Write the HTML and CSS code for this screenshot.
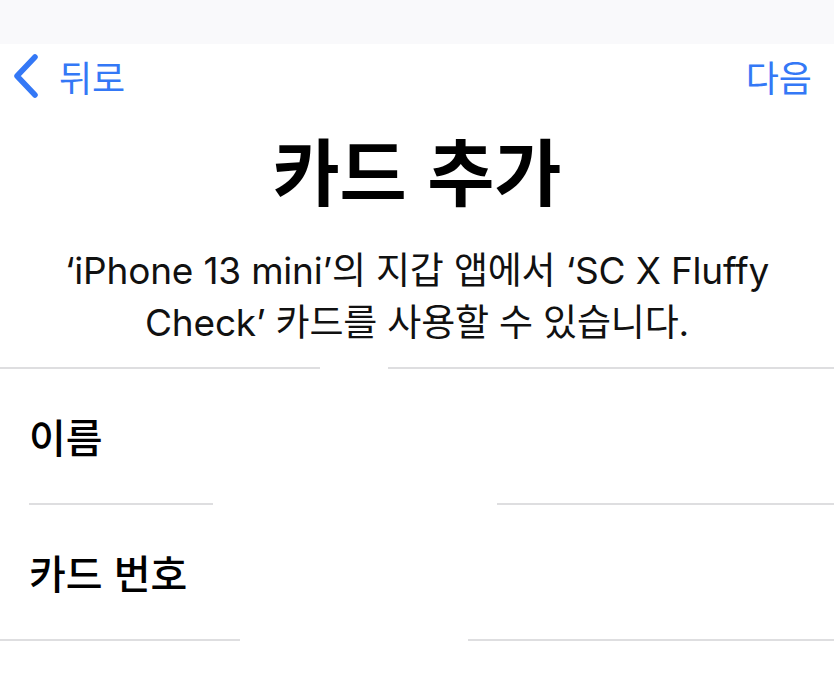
FILE: index.html
```html
<!DOCTYPE html>
<html lang="ko">
<head>
<meta charset="utf-8">
<link rel="stylesheet" href="styles.css">
</head>
<body>
<div class="status"></div>
<nav class="nav">
  <a class="back">
    <svg class="chev" width="26" height="44" viewBox="0 0 26 44"><polyline points="22,3 4,22 22,41" fill="none" stroke="#3478f6" stroke-width="5.5" stroke-linecap="round" stroke-linejoin="round"/></svg>
    <span>뒤로</span>
  </a>
  <a class="next">다음</a>
</nav>
<h1 class="title">카드 추가</h1>
<p class="desc">‘iPhone 13 mini’의 지갑 앱에서 ‘SC X Fluffy<br>Check’ 카드를 사용할 수 있습니다.</p>
<div class="sep sep1"><i class="a"></i><i class="b"></i></div>
<div class="row">이름</div>
<div class="sep sep2"><i class="a"></i><i class="b"></i></div>
<div class="row">카드 번호</div>
<div class="sep sep3"><i class="a"></i><i class="b"></i></div>
</body>
</html>
```

FILE: styles.css
```css
html, body {
  margin: 0;
  padding: 0;
  background: #ffffff;
}
body {
  font-family: "Inter", "Noto Sans CJK KR", sans-serif;
  color: #000;
  width: 834px;
  height: 699px;
  overflow: hidden;
}
.status {
  height: 44px;
  background: #f9f9fb;
}
.nav {
  height: 64px;
  display: flex;
  align-items: center;
  justify-content: space-between;
  padding: 0 22px 0 13px;
}
.back, .next {
  color: #3478f6;
  font-size: 36px;
  display: flex;
  align-items: center;
  font-family: "Noto Sans CJK KR", sans-serif;
}
.back span {
  margin-left: 20px;
}
.chev {
  display: block;
}
.title {
  margin: 15px 0 0;
  text-align: center;
  font-size: 73px;
  font-weight: 700;
  line-height: 90px;
  font-family: "Noto Sans CJK KR", sans-serif;
}
.desc {
  margin: 32px 0 0;
  text-align: center;
  font-size: 37px;
  line-height: 52px;
  color: #111;
  letter-spacing: -0.2px;
}
.sep {
  display: flex;
  justify-content: space-between;
  height: 2px;
}
.sep i {
  display: block;
  height: 2px;
  background: #dedee0;
}
.sep1 { margin-top: 18px; }
.sep1 .a { width: 320px; }
.sep1 .b { width: 446px; }
.sep2 { padding-left: 29px; }
.sep2 .a { width: 184px; }
.sep2 .b { width: 337px; }
.sep3 .a { width: 240px; }
.sep3 .b { width: 366px; }
.row {
  height: 134px;
  display: flex;
  align-items: center;
  padding-left: 29px;
  font-size: 40px;
  font-weight: 500;
  font-family: "Noto Sans CJK KR", sans-serif;
}
```
